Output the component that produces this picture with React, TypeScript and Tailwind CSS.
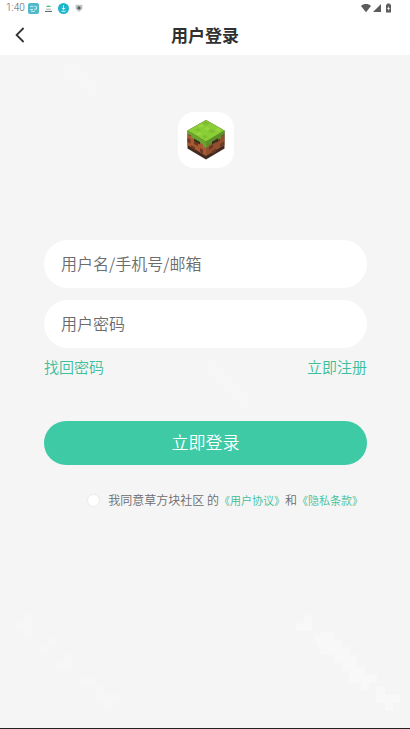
import React, { useState } from 'react';

const StatusBar: React.FC = () => (
  <div className="flex h-4 items-center justify-between pl-[6px] pr-[18px] text-[#5a5a5a]">
    <div className="flex items-center">
      <span className="w-[22px] font-[Roboto,sans-serif] text-[10px] leading-4">1:40</span>
      <svg className="h-[11px] w-[11px]" viewBox="0 0 11 11" aria-hidden="true">
        <rect width="11" height="11" rx="2" fill="#50b9c9" />
        <path d="M2 4l2-1 1.5 1M2 6.5h3M6.5 3.2l2 0.5v2.5H6M3 8.3h4" stroke="#c9f1f5" strokeWidth="1" fill="none" />
      </svg>
      <svg className="ml-[5px] h-[9px] w-[9px]" viewBox="0 0 9 9" aria-hidden="true">
        <path d="M2 3a2.5 1.6 0 0 1 5 0z" fill="#55bf76" />
        <path d="M2 5.2h5" stroke="#95a5a0" strokeWidth="0.8" />
        <path d="M1 7.4h7" stroke="#555f5a" strokeWidth="1" />
      </svg>
      <svg className="ml-[5px] h-[11px] w-[11px]" viewBox="0 0 11 11" aria-hidden="true">
        <circle cx="5.5" cy="5.5" r="5.5" fill="#1fb5cb" />
        <path d="M5.5 2.3v4M3.8 5l1.7 1.7L7.2 5M3.5 8.3h4" stroke="#d7f8fc" strokeWidth="1" fill="none" />
      </svg>
      <svg className="ml-[6px] h-[8px] w-[8px]" viewBox="0 0 8 8" aria-hidden="true">
        <path d="M1 1.2h6v3.6L4 7.5 1 4.8z" fill="#c5d0ce" stroke="#a5afad" strokeWidth="0.6" />
        <circle cx="4" cy="3.9" r="1.7" fill="#4f5c59" />
      </svg>
    </div>
    <svg className="h-[10px] w-[31px]" viewBox="0 0 31 10" fill="#5c5c5c" aria-hidden="true">
      <path d="M0 3C2.6 0.4 7.4 0.4 10 3L5 9.2z" />
      <path d="M20 1v8h-8z" />
      <path d="M25 1.5h1.2V0.5h2.6v1H30V9.5h-5z" />
      <path d="M27.8 3L26.2 6h1.1v2l1.6-3h-1.1z" fill="#fff" />
    </svg>
  </div>
);

const GrassBlock: React.FC = () => (
  <svg className="h-[40px] w-[38px]" viewBox="0 0 38 40" role="img" aria-label="草方块社区">
    <path d="M19 0L37.5 10.5V28.5L19 39.5L0.5 28.5V10.5z" fill="#422920" />
    <path d="M0.5 14L19 25V36L0.5 25z" fill="#a75a32" />
    <path d="M19 25L37.5 14V25L19 36z" fill="#92502f" />
    <path d="M0.5 18l3 1.8v4l-3-1.8zM7 21l4 2.3v3l-4-2.3zM13 28l3 1.8v4l-3-1.8zM4 25l4 2.3v3l-4-2.3z" fill="#6e3924" />
    <path d="M22 27l4-2.4v3L22 30zM29 20l4-2.4v3L29 23zM33 24l4-2.4v3L33 27zM25 31l4-2.4v3L25 34z" fill="#6a3825" />
    <path d="M0.5 10.5L19 21.5V28l-3-1.8v-2l-3-1.8v1L7 20v-1.5L4 17.6v-2L0.5 14z" fill="#6aa32f" />
    <path d="M19 21.5L37.5 10.5V14L34 16v2l-3 1.8V18l-6 3.5v2L22 25v1L19 28z" fill="#5c922a" />
    <path d="M7 18.5l6 3.5v2.6L7 21zM25 22l6-3.5V21l-6 3.6z" fill="#33301c" />
    <path d="M19 0L37.5 10.5L19 21.5L0.5 10.5z" fill="#8ace36" />
    <path d="M19 1l4 2.3-4 2.3-4-2.3zM11 8l3 1.7-3 1.7-3-1.7zM25 9l4 2.3-4 2.3-4-2.3zM18 15l3 1.7-3 1.7-3-1.7z" fill="#7fbe30" />
    <path d="M14 4l3 1.7-3 1.7-3-1.7zM20 7l3 1.7-3 1.7-3-1.7zM31 8l3 1.7-3 1.7-3-1.7zM12 12l3 1.7-3 1.7-3-1.7z" fill="#98d643" />
  </svg>
);

// Faint diagonal pattern behind the form
const Pattern: React.FC = () => (
  <svg
    className="pointer-events-none absolute inset-0 h-full w-full"
    viewBox="0 0 410 674"
    preserveAspectRatio="none"
    fill="#f8f8f8"
    aria-hidden="true"
  >
    <path d="M296 569h8v-8h8v16h-16zM313 581h8v-4h12v8h8v8h8v8h8v12h8v8h12v8h-8v8h-8v-8h-12v-12h-8v-8h-8v-8h-12zM376 633h9v8h15v8h-7v8h-8v-8h-9z" />
    <path d="M16 569h8v-8h8v24h-8v-8h-8zM48 585h8v8h-8v8h-8v-8h8zM64 601h8v16H56v-8h8zM80 625h16v8h8v8h16v8h-8v8h-8v-8h-8v-16H80z" fill="#f7f7f7" />
    <path d="M208 305h8v8h8v8h8v8h8v8h8v16h-8v-8h-8v-8h-8v-8h-8v-8h-8zM64 9h16v8h8v8h8v16h-8v-8h-8v-8H64z" fill="#f7f7f7" />
  </svg>
);

const fieldClass =
  'block h-12 w-full rounded-full bg-white px-[17px] pb-[2px] text-[16px] leading-6 text-[#333] placeholder-[#6c6c6c] outline-none';

const App: React.FC = () => {
  const [agreed, setAgreed] = useState(false);

  return (
    <div className="flex min-h-screen flex-col border-b border-[#222] bg-[#f5f5f5] font-['Noto_Sans_CJK_SC',sans-serif] font-[350]">
      <header className="bg-white">
        <StatusBar />
        <div className="grid h-[39px] grid-cols-[40px_1fr_40px] items-center pb-[2px]">
          <button type="button" aria-label="返回" className="flex h-full items-center justify-center text-[#333]">
            <svg className="h-4 w-[10px]" viewBox="0 0 10 16" fill="none" stroke="currentColor" strokeWidth="1.8" aria-hidden="true">
              <path d="M8.6 1L1.6 8l7 7" />
            </svg>
          </button>
          <h1 className="text-center text-[17px] font-bold leading-6 text-[#303030]">用户登录</h1>
        </div>
      </header>

      <main className="relative flex-grow">
        <Pattern />
        <div className="relative flex flex-col pl-11 pr-[43px] pt-[57px]">
          <div className="flex h-14 w-14 items-center justify-center self-center rounded-2xl bg-white">
            <GrassBlock />
          </div>

          <form className="mt-[72px]" onSubmit={(e) => e.preventDefault()}>
            <div className="flex flex-col gap-3">
              <input type="text" aria-label="用户名/手机号/邮箱" placeholder="用户名/手机号/邮箱" className={fieldClass} />
              <input type="password" aria-label="用户密码" placeholder="用户密码" className={fieldClass} />
            </div>

            <div className="mt-[7px] flex justify-between text-[15px] leading-6 text-[#3dbf99]">
              <a href="#reset">找回密码</a>
              <a href="#register">立即注册</a>
            </div>

            <button
              type="submit"
              className="mt-[42px] block h-11 w-full rounded-full bg-[#3ecaa5] pb-[2px] text-[17px] leading-6 text-white"
            >
              立即登录
            </button>

            <div className="mt-[25px] flex items-center justify-end whitespace-nowrap pr-1 text-[12px] leading-5 text-[#6c6c6c]">
              <input
                id="agree"
                type="checkbox"
                checked={agreed}
                onChange={(e) => setAgreed(e.target.checked)}
                className="mr-2 h-[13px] w-[13px] appearance-none rounded-full border border-[#ebebeb] bg-white checked:bg-[#3ecaa5]"
              />
              <label htmlFor="agree">我同意草方块社区 的</label>
              <a href="#terms" className="text-[11px] text-[#3dbf99]">《用户协议》</a>
              <span>和</span>
              <a href="#privacy" className="text-[11px] text-[#3dbf99]">《隐私条款》</a>
            </div>
          </form>
        </div>
      </main>
    </div>
  );
};

export default App;
